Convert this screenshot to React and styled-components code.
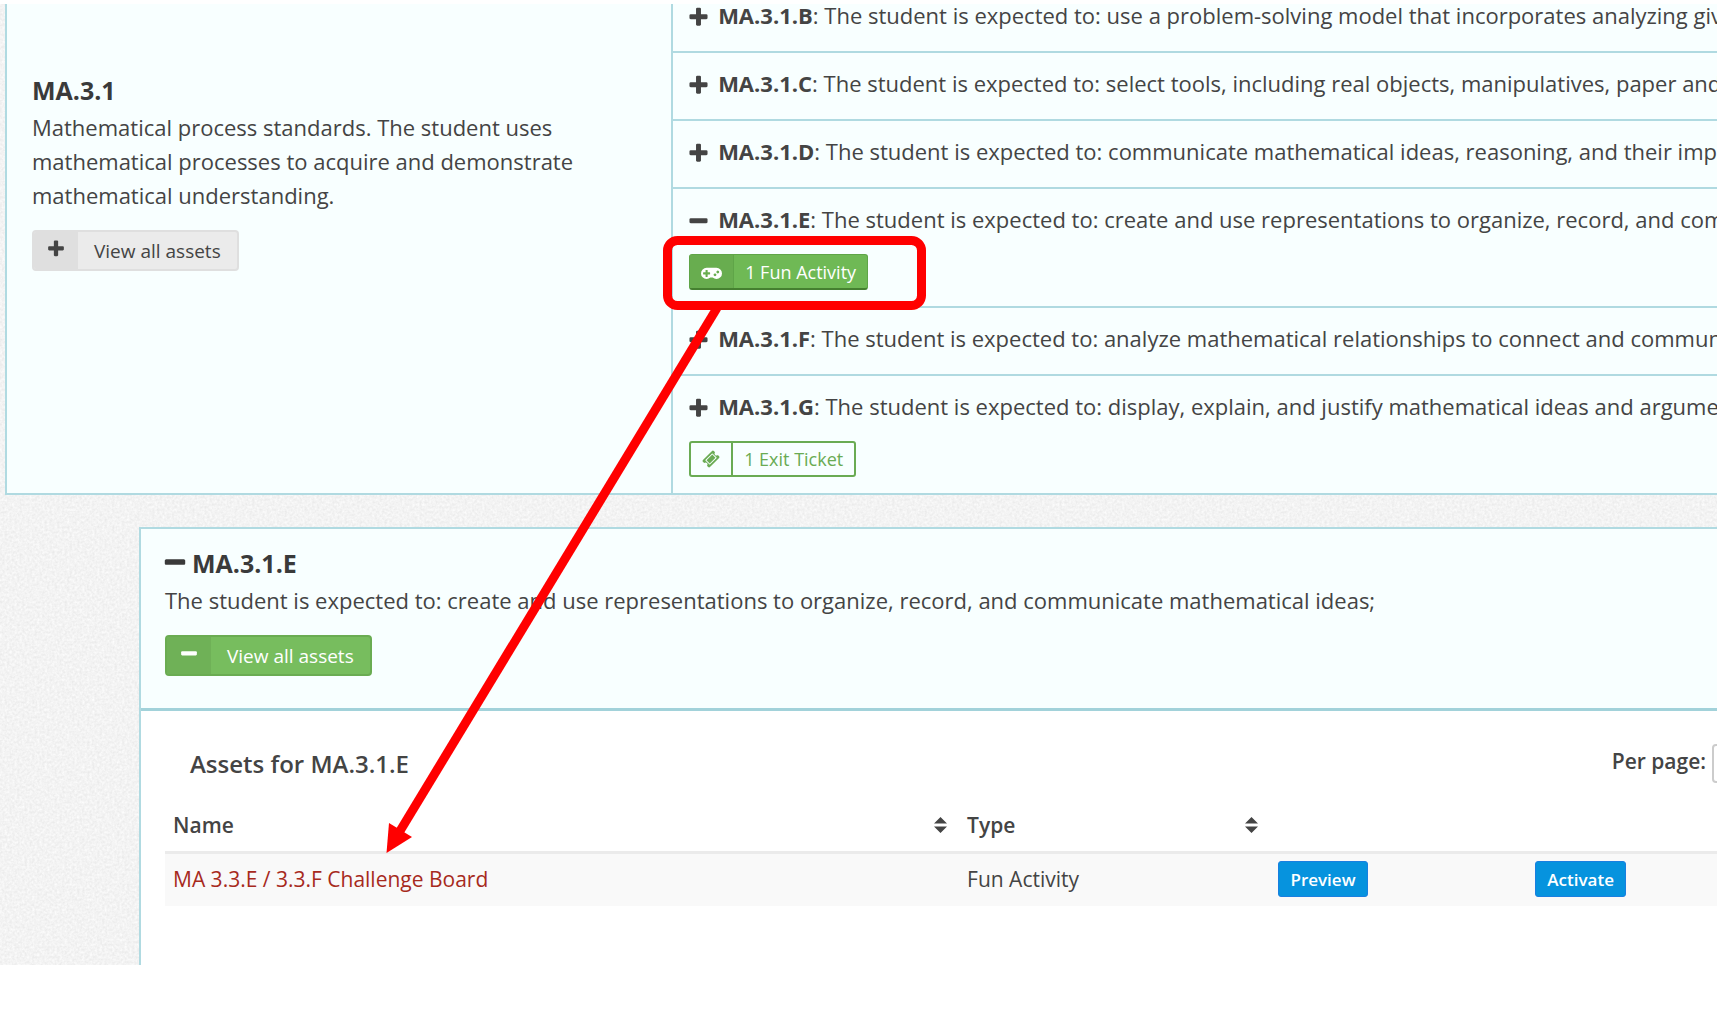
import React from "react";
import styled, { createGlobalStyle, css } from "styled-components";

const standards = [
    { code: "MA.3.1.B", text: "use a problem-solving model that incorporates analyzing given information, formulating a plan or strategy;" },
    { code: "MA.3.1.C", text: "select tools, including real objects, manipulatives, paper and pencil, and technology as appropriate;" },
    { code: "MA.3.1.D", text: "communicate mathematical ideas, reasoning, and their implications using multiple representations;" },
    { code: "MA.3.1.E", text: "create and use representations to organize, record, and communicate mathematical ideas;", open: true, asset: "1 Fun Activity", kind: "game" },
    { code: "MA.3.1.F", text: "analyze mathematical relationships to connect and communicate mathematical ideas;" },
    { code: "MA.3.1.G", text: "display, explain, and justify mathematical ideas and arguments using precise mathematical language;", asset: "1 Exit Ticket", kind: "ticket" },
];

const assets = [
    { name: "MA 3.3.E / 3.3.F Challenge Board", type: "Fun Activity" },
];

export default function App() {
    return (
        <>
            <GlobalStyle />
            <Page>
                <Grain />

                <StandardPanel>
                    <StandardSummary>
                        <StandardTitle>MA.3.1</StandardTitle>
                        <StandardText>
                            Mathematical process standards. The student uses mathematical processes to acquire and demonstrate mathematical understanding.
                        </StandardText>
                        <ViewButton type="button">
                            <ViewButtonIcon><PlusIcon size={20} /></ViewButtonIcon>
                            <ViewButtonLabel>View all assets</ViewButtonLabel>
                        </ViewButton>
                    </StandardSummary>

                    <StandardList>
                        {standards.map(item => (
                            <StandardRow key={item.code} $asset={item.asset}>
                                <StandardLine>
                                    {item.open ? <MinusIcon size={23} /> : <PlusIcon size={23} />}
                                    <span><strong>{item.code}</strong>: The student is expected to: {item.text}</span>
                                </StandardLine>
                                {item.asset && (
                                    <AssetChip type="button" $kind={item.kind}>
                                        <AssetChipIcon $kind={item.kind}>
                                            {item.kind === "game" ? <GamepadIcon /> : <TicketIcon />}
                                        </AssetChipIcon>
                                        <AssetChipLabel>{item.asset}</AssetChipLabel>
                                    </AssetChip>
                                )}
                            </StandardRow>
                        ))}
                    </StandardList>
                </StandardPanel>

                <DetailPanel>
                    <DetailHeader>
                        <StandardTitle><MinusIcon size={26} />MA.3.1.E</StandardTitle>
                        <StandardText>
                            The student is expected to: create and use representations to organize, record, and communicate mathematical ideas;
                        </StandardText>
                        <ViewButton type="button" $active>
                            <ViewButtonIcon $active><MinusIcon size={20} /></ViewButtonIcon>
                            <ViewButtonLabel>View all assets</ViewButtonLabel>
                        </ViewButton>
                    </DetailHeader>

                    <AssetsSection>
                        <AssetsToolbar>
                            <AssetsTitle>Assets for MA.3.1.E</AssetsTitle>
                            <PerPage>
                                <label htmlFor="per-page">Per page:</label>
                                <PerPageSelect id="per-page" defaultValue="10">
                                    <option value="10">10</option>
                                    <option value="25">25</option>
                                </PerPageSelect>
                            </PerPage>
                        </AssetsToolbar>

                        <AssetsTable>
                            <colgroup>
                                <NameCol />
                                <TypeCol />
                                <ActionCol />
                                <col />
                            </colgroup>
                            <thead>
                                <tr>
                                    <th scope="col"><HeadCell>Name<SortIcon /></HeadCell></th>
                                    <th scope="col"><HeadCell>Type<SortIcon /></HeadCell></th>
                                    <td />
                                    <td />
                                </tr>
                            </thead>
                            <tbody>
                                {assets.map(asset => (
                                    <tr key={asset.name}>
                                        <td><AssetLink href="#asset">{asset.name}</AssetLink></td>
                                        <td>{asset.type}</td>
                                        <td><ActionButton type="button">Preview</ActionButton></td>
                                        <td><ActionButton type="button">Activate</ActionButton></td>
                                    </tr>
                                ))}
                            </tbody>
                        </AssetsTable>
                    </AssetsSection>
                </DetailPanel>

                <Callout width="1000" height="900" viewBox="0 0 1000 900" aria-hidden="true">
                    <rect x="667.5" y="240.5" width="254" height="65" rx="10" fill="none" stroke="#ff0000" strokeWidth="9" />
                    <path d="M717 308L400 831" stroke="#ff0000" strokeWidth="9" />
                    <path d="M386.5 853L389 823L412 837Z" fill="#ff0000" />
                </Callout>
            </Page>
        </>
    )
}

function PlusIcon({ size }) {
    return (
        <svg width={size} height={size} viewBox="0 0 1792 1792" fill="currentColor" aria-hidden="true">
            <path d="M1600 736v192q0 40-28 68t-68 28h-416v416q0 40-28 68t-68 28h-192q-40 0-68-28t-28-68v-416h-416q-40 0-68-28t-28-68v-192q0-40 28-68t68-28h416v-416q0-40 28-68t68-28h192q40 0 68 28t28 68v416h416q40 0 68 28t28 68z" />
        </svg>
    )
}

function MinusIcon({ size }) {
    return (
        <svg width={size} height={size} viewBox="0 0 1792 1792" fill="currentColor" aria-hidden="true">
            <path d="M1600 736v192q0 40-28 68t-68 28h-1216q-40 0-68-28t-28-68v-192q0-40 28-68t68-28h1216q40 0 68 28t28 68z" />
        </svg>
    )
}

function GamepadIcon() {
    return (
        <svg width="21" height="20" viewBox="0 0 1920 1792" fill="currentColor" aria-hidden="true">
            <path d="M832 1088v-128q0-14-9-23t-23-9h-192v-192q0-14-9-23t-23-9h-128q-14 0-23 9t-9 23v192h-192q-14 0-23 9t-9 23v128q0 14 9 23t23 9h192v192q0 14 9 23t23 9h128q14 0 23-9t9-23v-192h192q14 0 23-9t9-23zm576 64q0-53-37.5-90.5t-90.5-37.5-90.5 37.5-37.5 90.5 37.5 90.5 90.5 37.5 90.5-37.5 37.5-90.5zm256-256q0-53-37.5-90.5t-90.5-37.5-90.5 37.5-37.5 90.5 37.5 90.5 90.5 37.5 90.5-37.5 37.5-90.5zm256 128q0 212-150 362t-362 150q-192 0-338-128h-220q-146 128-338 128-212 0-362-150t-150-362 150-362 362-150h896q212 0 362 150t150 362z" />
        </svg>
    )
}

function TicketIcon() {
    return (
        <svg width="18" height="18" viewBox="0 0 1792 1792" fill="currentColor" aria-hidden="true">
            <path d="M1024 452l316 316-572 572-316-316zm-211 979l618-618q19-19 19-45t-19-45l-362-362q-18-18-45-18t-45 18l-618 618q-19 19-19 45t19 45l362 362q18 18 45 18t45-18zm889-637l-907 908q-37 37-90.5 37t-90.5-37l-126-126q56-56 56-136t-56-136-136-56-136 56l-125-126q-37-37-37-90.5t37-90.5l907-906q37-37 90.5-37t90.5 37l125 125q-56 56-56 136t56 136 136 56 136-56l126 125q37 37 37 90.5t-37 90.5z" />
        </svg>
    )
}

function SortIcon() {
    return (
        <svg width="13" height="16" viewBox="0 0 13 16" fill="currentColor" aria-hidden="true">
            <path d="M6.5 0L13 6.5H0zM6.5 16L0 9.5H13z" />
        </svg>
    )
}

function Grain() {
    return (
        <GrainLayer aria-hidden="true">
            <filter id="grain" colorInterpolationFilters="sRGB">
                <feTurbulence type="fractalNoise" baseFrequency="0.4" numOctaves="2" seed="4" />
                <feColorMatrix values="0.1 0 0 0 0.903  0.1 0 0 0 0.903  0.1 0 0 0 0.903  0 0 0 0 1" />
            </filter>
            <rect width="100%" height="100%" filter="url(#grain)" />
        </GrainLayer>
    )
}



const GlobalStyle = createGlobalStyle`
  body {
    margin: 0;
    background: #fff;
    color: #444;
    font-family: "Open Sans", "Noto Sans", sans-serif;
    font-size: 22px;
    line-height: 34px;
  }

  button,
  select {
    font-family: inherit;
  }
`;

const Page = styled.main`
  position: relative;
  margin-top: 4px;
  overflow: hidden;
  background: #f3f3f3;
`;

const GrainLayer = styled.svg`
  position: absolute;
  top: 0;
  left: 0;
  width: 100%;
  height: 100%;
`;

const Callout = styled.svg`
  position: absolute;
  top: -4px;
  left: 0;
  pointer-events: none;
`;

const StandardPanel = styled.section`
  position: relative;
  display: grid;
  grid-template-columns: 3fr 5fr;
  margin-left: 5px;
  margin-right: -63px;
  border: 2px solid #b0dae1;
  border-top: 0;
  background: #f8ffff;
`;

const StandardSummary = styled.div`
  padding: 68px 60px 24px 25px;
`;

const StandardTitle = styled.h2`
  display: flex;
  align-items: center;
  gap: 4px;
  margin: 0 0 2px;
  font-size: 25px;
  font-weight: 700;
  line-height: 36px;
  color: #3a3a3a;

  svg {
    margin-left: -3px;
  }
`;

const StandardText = styled.p`
  margin: 0 0 18px;
`;

const ViewButton = styled.button`
  display: inline-flex;
  align-items: stretch;
  height: 41px;
  padding: 0;
  border: 2px solid #dfdfdf;
  border-radius: 4px;
  background: #ebebeb;
  color: #444;
  font-size: 19px;
  overflow: hidden;

  ${props => props.$active && css`
    border-color: #6aac52;
    background: #77bd5e;
    color: #fff;
  `}
`;

const ViewButtonIcon = styled.span`
  display: flex;
  align-items: center;
  padding: 0 12px 3px;
  background: ${props => props.$active ? "#6fb157" : "#dfdfdf"};
`;

const ViewButtonLabel = styled.span`
  display: flex;
  align-items: center;
  padding: 0 16px;
`;

const StandardList = styled.ul`
  margin: 0;
  padding: 0;
  border-left: 2px solid #b0dae1;
  list-style: none;
  overflow: hidden;
`;

const StandardRow = styled.li`
  padding: 13px 16px ${props => props.$asset ? "16px" : "19px"};
  white-space: nowrap;

  & + & {
    border-top: 2px solid #b0dae1;
  }

  &:first-child {
    margin-top: -19px;
  }
`;

const StandardLine = styled.div`
  display: flex;
  align-items: center;
  gap: 8px;

  svg {
    flex: none;
    margin-top: 4px;
    margin-left: -2px;
  }
`;

const AssetChip = styled.button`
  display: flex;
  height: 36px;
  margin-top: 18px;
  padding: 0;
  border: 2px solid #6aab53;
  border-radius: 3px;
  background: #f8ffff;
  color: #6aab53;
  font-size: 18px;

  ${props => props.$kind === "game" && css`
    border: 1px solid #5fa548;
    border-bottom: 2px solid #458030;
    background: #6fb955;
    color: #fff;
  `}
`;

const AssetChipIcon = styled.span`
  display: flex;
  align-items: center;
  padding: 0 11px;
  border-right: 2px solid #6aab53;

  ${props => props.$kind === "game" && css`
    border-right: 1px solid #5fa548;
    background: #68ad4f;
  `}
`;

const AssetChipLabel = styled.span`
  display: flex;
  align-items: center;
  padding: 0 11px;
`;

const DetailPanel = styled.section`
  position: relative;
  margin: 32px -60px 0 139px;
  border: 2px solid #b0dae1;
  border-bottom: 0;
`;

const DetailHeader = styled.div`
  padding: 16px 24px 32px;
  border-bottom: 3px solid #a2d2da;
  background: #f8ffff;
`;

const AssetsSection = styled.div`
  padding: 33px 53px 59px 24px;
  background: #fff;
`;

const AssetsToolbar = styled.div`
  display: flex;
  align-items: center;
  justify-content: space-between;
  margin: 0 -53px 14px 25px;
`;

const AssetsTitle = styled.h3`
  margin: 0;
  font-size: 24px;
  font-weight: 600;
  line-height: 36px;
`;

const PerPage = styled.div`
  display: flex;
  align-items: flex-start;
  gap: 6px;
  font-size: 21px;
  font-weight: 600;
`;

const PerPageSelect = styled.select`
  width: 63px;
  height: 39px;
  border: 2px solid #ccc;
  border-radius: 4px;
  background: #fff;
  color: #444;
  font-size: 18px;
`;

const AssetsTable = styled.table`
  width: 100%;
  table-layout: fixed;
  border-collapse: collapse;
  font-size: 21px;
  line-height: 36px;

  th,
  td {
    padding: 7px 8px 9px;
    text-align: left;
    vertical-align: top;
  }

  thead th,
  thead td {
    padding: 10px 12px 8px 8px;
    border-bottom: 3px solid #ebebeb;
    font-weight: 600;
  }

  tbody tr {
    background: #f9f9f9;
  }
`;

const NameCol = styled.col`
  width: 51%;
`;

const TypeCol = styled.col`
  width: 20%;
`;

const ActionCol = styled.col`
  width: 16.5%;
`;

const HeadCell = styled.div`
  display: flex;
  align-items: center;
  justify-content: space-between;
`;

const AssetLink = styled.a`
  color: #a72a1d;
  text-decoration: none;
`;

const ActionButton = styled.button`
  display: block;
  height: 36px;
  padding: 0 11px;
  border: 1px solid #1a7fe0;
  border-radius: 3px;
  background: #0693de;
  color: #fff;
  font-size: 17px;
  font-weight: 600;
`;
